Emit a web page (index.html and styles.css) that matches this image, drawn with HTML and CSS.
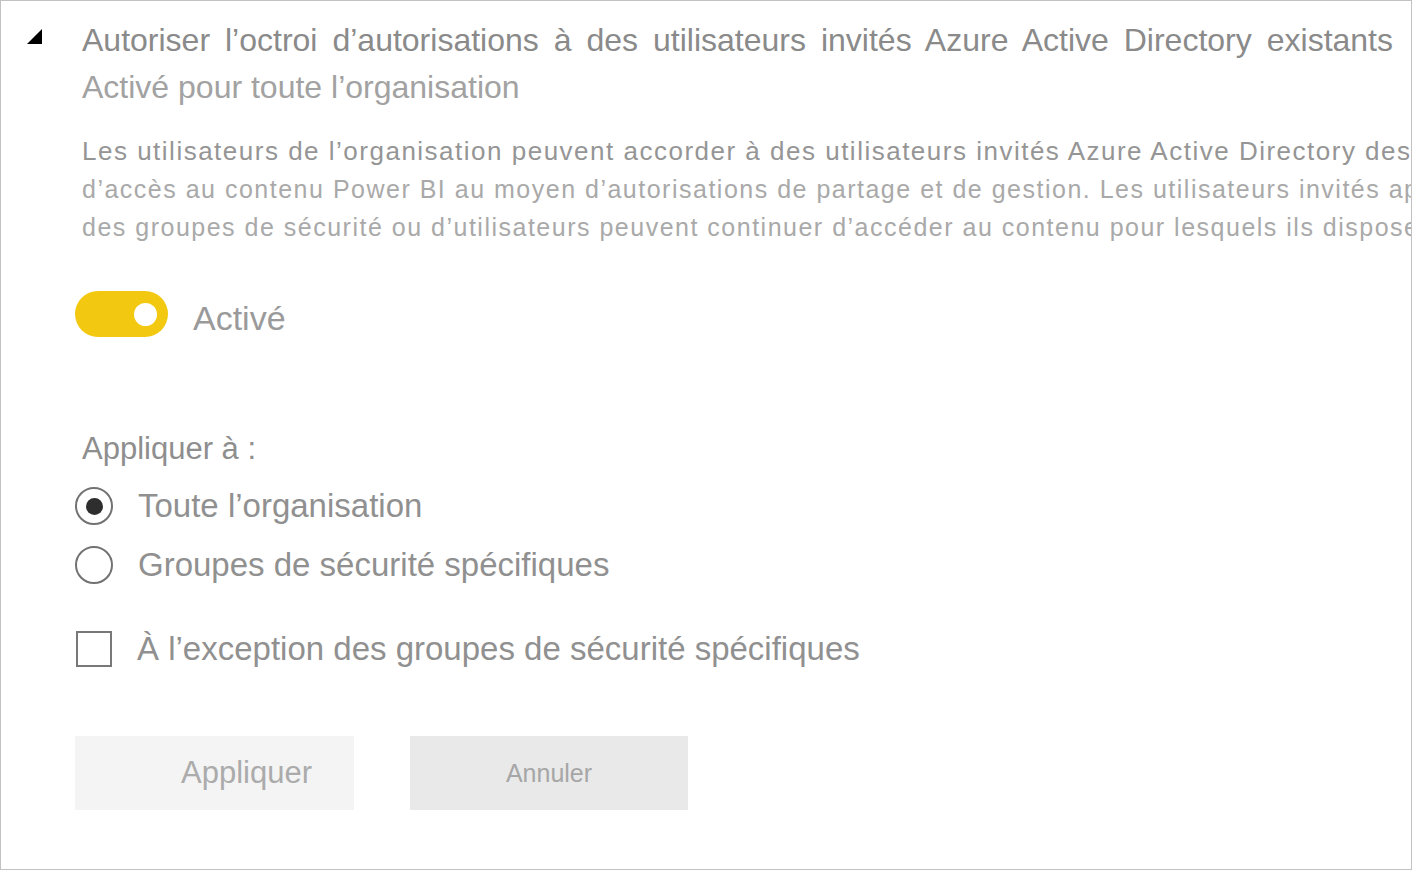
FILE: index.html
```html
<!DOCTYPE html>
<html lang="fr">
<head>
<meta charset="utf-8">
<title>Paramètre</title>
<link rel="stylesheet" href="styles.css">
</head>
<body>
<div class="panel">
  <div class="header">
    <div class="caret-col">
      <svg class="caret" width="17" height="17" viewBox="0 0 17 17"><polygon points="16,1 16,16 1,16" fill="#000"/></svg>
    </div>
    <div class="heading">
      <div class="title">Autoriser l’octroi d’autorisations à des utilisateurs invités Azure Active Directory existants</div>
      <div class="subtitle">Activé pour toute l’organisation</div>
    </div>
  </div>
  <div class="content">
    <p class="desc"><span class="desc-strong">Les utilisateurs de l’organisation peuvent accorder à des utilisateurs invités Azure Active Directory des autorisations</span><br>d’accès au contenu Power BI au moyen d’autorisations de partage et de gestion. Les utilisateurs invités appartenant à<br>des groupes de sécurité ou d’utilisateurs peuvent continuer d’accéder au contenu pour lesquels ils disposent</p>

    <div class="toggle-row">
      <span class="toggle"><span class="knob"></span></span>
      <span class="toggle-label">Activé</span>
    </div>

    <div class="apply-label">Appliquer à :</div>

    <div class="option">
      <span class="radio checked"></span>
      <span class="opt-label">Toute l’organisation</span>
    </div>
    <div class="option second">
      <span class="radio"></span>
      <span class="opt-label">Groupes de sécurité spécifiques</span>
    </div>
    <div class="option except">
      <span class="checkbox"></span>
      <span class="opt-label">À l’exception des groupes de sécurité spécifiques</span>
    </div>

    <div class="actions">
      <button class="btn btn-apply">Appliquer</button>
      <button class="btn btn-cancel">Annuler</button>
    </div>
  </div>
</div>
</body>
</html>
```

FILE: styles.css
```css
* { box-sizing: border-box; }
html, body { margin: 0; padding: 0; background: #fff; }
body { font-family: "Liberation Sans", Arial, sans-serif; }

.panel {
  width: 1412px;
  height: 870px;
  border: 1px solid #c2c2c2;
  overflow: hidden;
  background: #fff;
}

.header {
  display: grid;
  grid-template-columns: 81px 1fr;
  padding-top: 19px;
}
.caret-col { padding-left: 25px; padding-top: 8px; }
.caret { display: block; }

.heading { width: 1311px; }
.title {
  font-size: 32px;
  line-height: 40px;
  color: #8a8a8a;
  text-align: justify;
  text-align-last: justify;
  white-space: nowrap;
}
.subtitle {
  margin-top: 7px;
  font-size: 32px;
  line-height: 40px;
  color: #a2a2a2;
}

.content { padding-left: 74px; }

.desc {
  margin: 25px 0 0 7px;
  font-size: 25px;
  line-height: 38px;
  letter-spacing: 1.5px;
  color: #a9a9a9;
  white-space: nowrap;
}
.desc-strong {
  font-size: 26px;
  color: #959595;
}

.toggle-row {
  display: flex;
  align-items: flex-start;
  margin-top: 45px;
}
.toggle {
  width: 93px;
  height: 46px;
  border-radius: 23px;
  background: #f2c811;
  display: flex;
  align-items: center;
  justify-content: flex-end;
  padding-right: 11px;
}
.knob {
  width: 23px;
  height: 23px;
  border-radius: 50%;
  background: #fff;
}
.toggle-label {
  margin-left: 25px;
  margin-top: 4px;
  font-size: 34px;
  line-height: 46px;
  color: #9a9a9a;
}

.apply-label {
  margin: 88px 0 0 7px;
  font-size: 31px;
  line-height: 40px;
  color: #8e8e8e;
}

.option {
  display: flex;
  align-items: center;
  height: 38px;
  margin-top: 18px;
}
.option.second { margin-top: 21px; }
.option.except { margin-top: 46px; }

.radio {
  width: 38px;
  height: 38px;
  border-radius: 50%;
  border: 2.5px solid #727272;
  display: flex;
  align-items: center;
  justify-content: center;
  flex: none;
}
.radio.checked::after {
  content: "";
  width: 17px;
  height: 17px;
  border-radius: 50%;
  background: #2e2e2e;
}
.checkbox {
  width: 36px;
  height: 36px;
  margin-left: 1px;
  border: 2px solid #787878;
  flex: none;
}
.opt-label {
  margin-left: 25px;
  font-size: 33px;
  line-height: 38px;
  color: #909090;
}

.actions {
  display: flex;
  gap: 56px;
  margin-top: 68px;
}
.btn {
  height: 74px;
  border: none;
  font-family: "Liberation Sans", Arial, sans-serif;
  display: flex;
  align-items: center;
  padding: 0;
}
.btn-apply {
  width: 279px;
  background: #f4f4f4;
  color: #ababab;
  font-size: 31px;
  padding-left: 106px;
}
.btn-cancel {
  width: 278px;
  background: #e9e9e9;
  color: #a6a6a6;
  font-size: 25px;
  justify-content: center;
}
```
